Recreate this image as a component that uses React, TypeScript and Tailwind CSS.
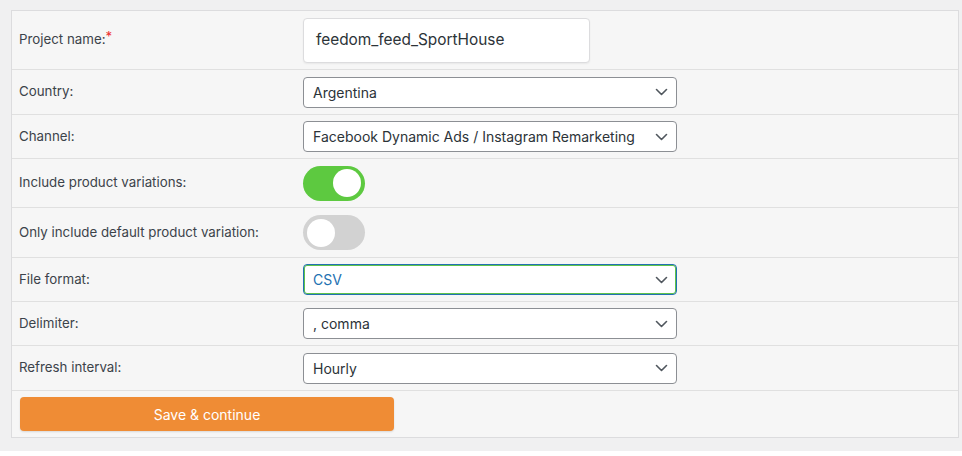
import React, { useState } from 'react';

const Chevron: React.FC = () => (
    <svg width="13" height="8" viewBox="0 0 13 8" className="shrink-0">
        <polyline points="1.5,1.5 6.5,6.5 11.5,1.5" fill="none" stroke="#50575e" strokeWidth="1.6" strokeLinecap="round" strokeLinejoin="round" />
    </svg>
);

interface SelectBoxProps {
    value: string;
    focused?: boolean;
}

const SelectBox: React.FC<SelectBoxProps> = ({ value, focused }) => (
    <div
        className={
            focused
                ? 'w-[374px] h-[31px] flex items-center justify-between pl-[9px] pr-[8px] bg-white rounded-[4px] border border-[#2271b1] shadow-[inset_0_0_0_1px_#5fc34a] text-[14px] text-[#2271b1]'
                : 'w-[374px] h-[31px] flex items-center justify-between pl-[9px] pr-[8px] bg-white rounded-[4px] border border-[#8c8f94] text-[14px] text-[#2c3338]'
        }
    >
        <span>{value}</span>
        <Chevron />
    </div>
);

const Toggle: React.FC<{ on: boolean; onClick: () => void }> = ({ on, onClick }) => (
    <button
        onClick={onClick}
        className={
            on
                ? 'w-[62px] h-[35px] rounded-full bg-[#5dc940] flex items-center justify-end pr-[4px]'
                : 'w-[62px] h-[35px] rounded-full bg-[#d2d2d2] flex items-center justify-start pl-[4px]'
        }
    >
        <span className="w-[28px] h-[28px] rounded-full bg-white block" />
    </button>
);

const Row: React.FC<{ label: React.ReactNode; className: string; children: React.ReactNode }> = ({ label, className, children }) => (
    <div className={`flex items-center border-t border-[#e0e0e0] first:border-t-0 ${className}`}>
        <div className="w-[291px] pl-[7px] text-[13.3px] text-[#3c434a]">{label}</div>
        <div className="flex items-center">{children}</div>
    </div>
);

const App: React.FC = () => {
    const [variations, setVariations] = useState(true);
    const [defaultOnly, setDefaultOnly] = useState(false);

    return (
        <div className="w-[962px] h-[456px] bg-white" style={{ fontFamily: 'Inter, "Liberation Sans", Arial, sans-serif' }}>
            <div className="bg-[#f0f0f1] pt-[10px] pl-[11px] pr-[3px] pb-[13px]">
                <div className="bg-[#f6f6f6] border border-[#dcdcde]">
                    <Row className="h-[58px]" label={<>Project name:<span className="text-[#e33] relative -top-[3px]">*</span></>}>
                        <div className="w-[287px] h-[45px] bg-white border border-[#dcdcde] rounded-[4px] shadow-[0_1px_2px_rgba(0,0,0,0.06)] flex items-center pl-[12px] text-[15.4px] text-[#2c3338]">
                            feedom_feed_SportHouse
                        </div>
                    </Row>
                    <Row className="h-[45px]" label="Country:">
                        <SelectBox value="Argentina" />
                    </Row>
                    <Row className="h-[44px]" label="Channel:">
                        <SelectBox value="Facebook Dynamic Ads / Instagram Remarketing" />
                    </Row>
                    <Row className="h-[49px]" label="Include product variations:">
                        <Toggle on={variations} onClick={() => setVariations(!variations)} />
                    </Row>
                    <Row className="h-[50px]" label="Only include default product variation:">
                        <Toggle on={defaultOnly} onClick={() => setDefaultOnly(!defaultOnly)} />
                    </Row>
                    <Row className="h-[44px]" label="File format:">
                        <SelectBox value="CSV" focused />
                    </Row>
                    <Row className="h-[44px]" label="Delimiter:">
                        <SelectBox value=", comma" />
                    </Row>
                    <Row className="h-[45px]" label="Refresh interval:">
                        <SelectBox value="Hourly" />
                    </Row>
                    <div className="h-[47px] border-t border-[#e0e0e0] flex items-center pl-[8px]">
                        <button className="w-[374px] h-[34px] rounded-[4px] bg-[#ef8c35] text-white text-[14px] shadow-[0_1px_2px_rgba(0,0,0,0.12)]">
                            Save &amp; continue
                        </button>
                    </div>
                </div>
            </div>
        </div>
    );
};

export default App;
